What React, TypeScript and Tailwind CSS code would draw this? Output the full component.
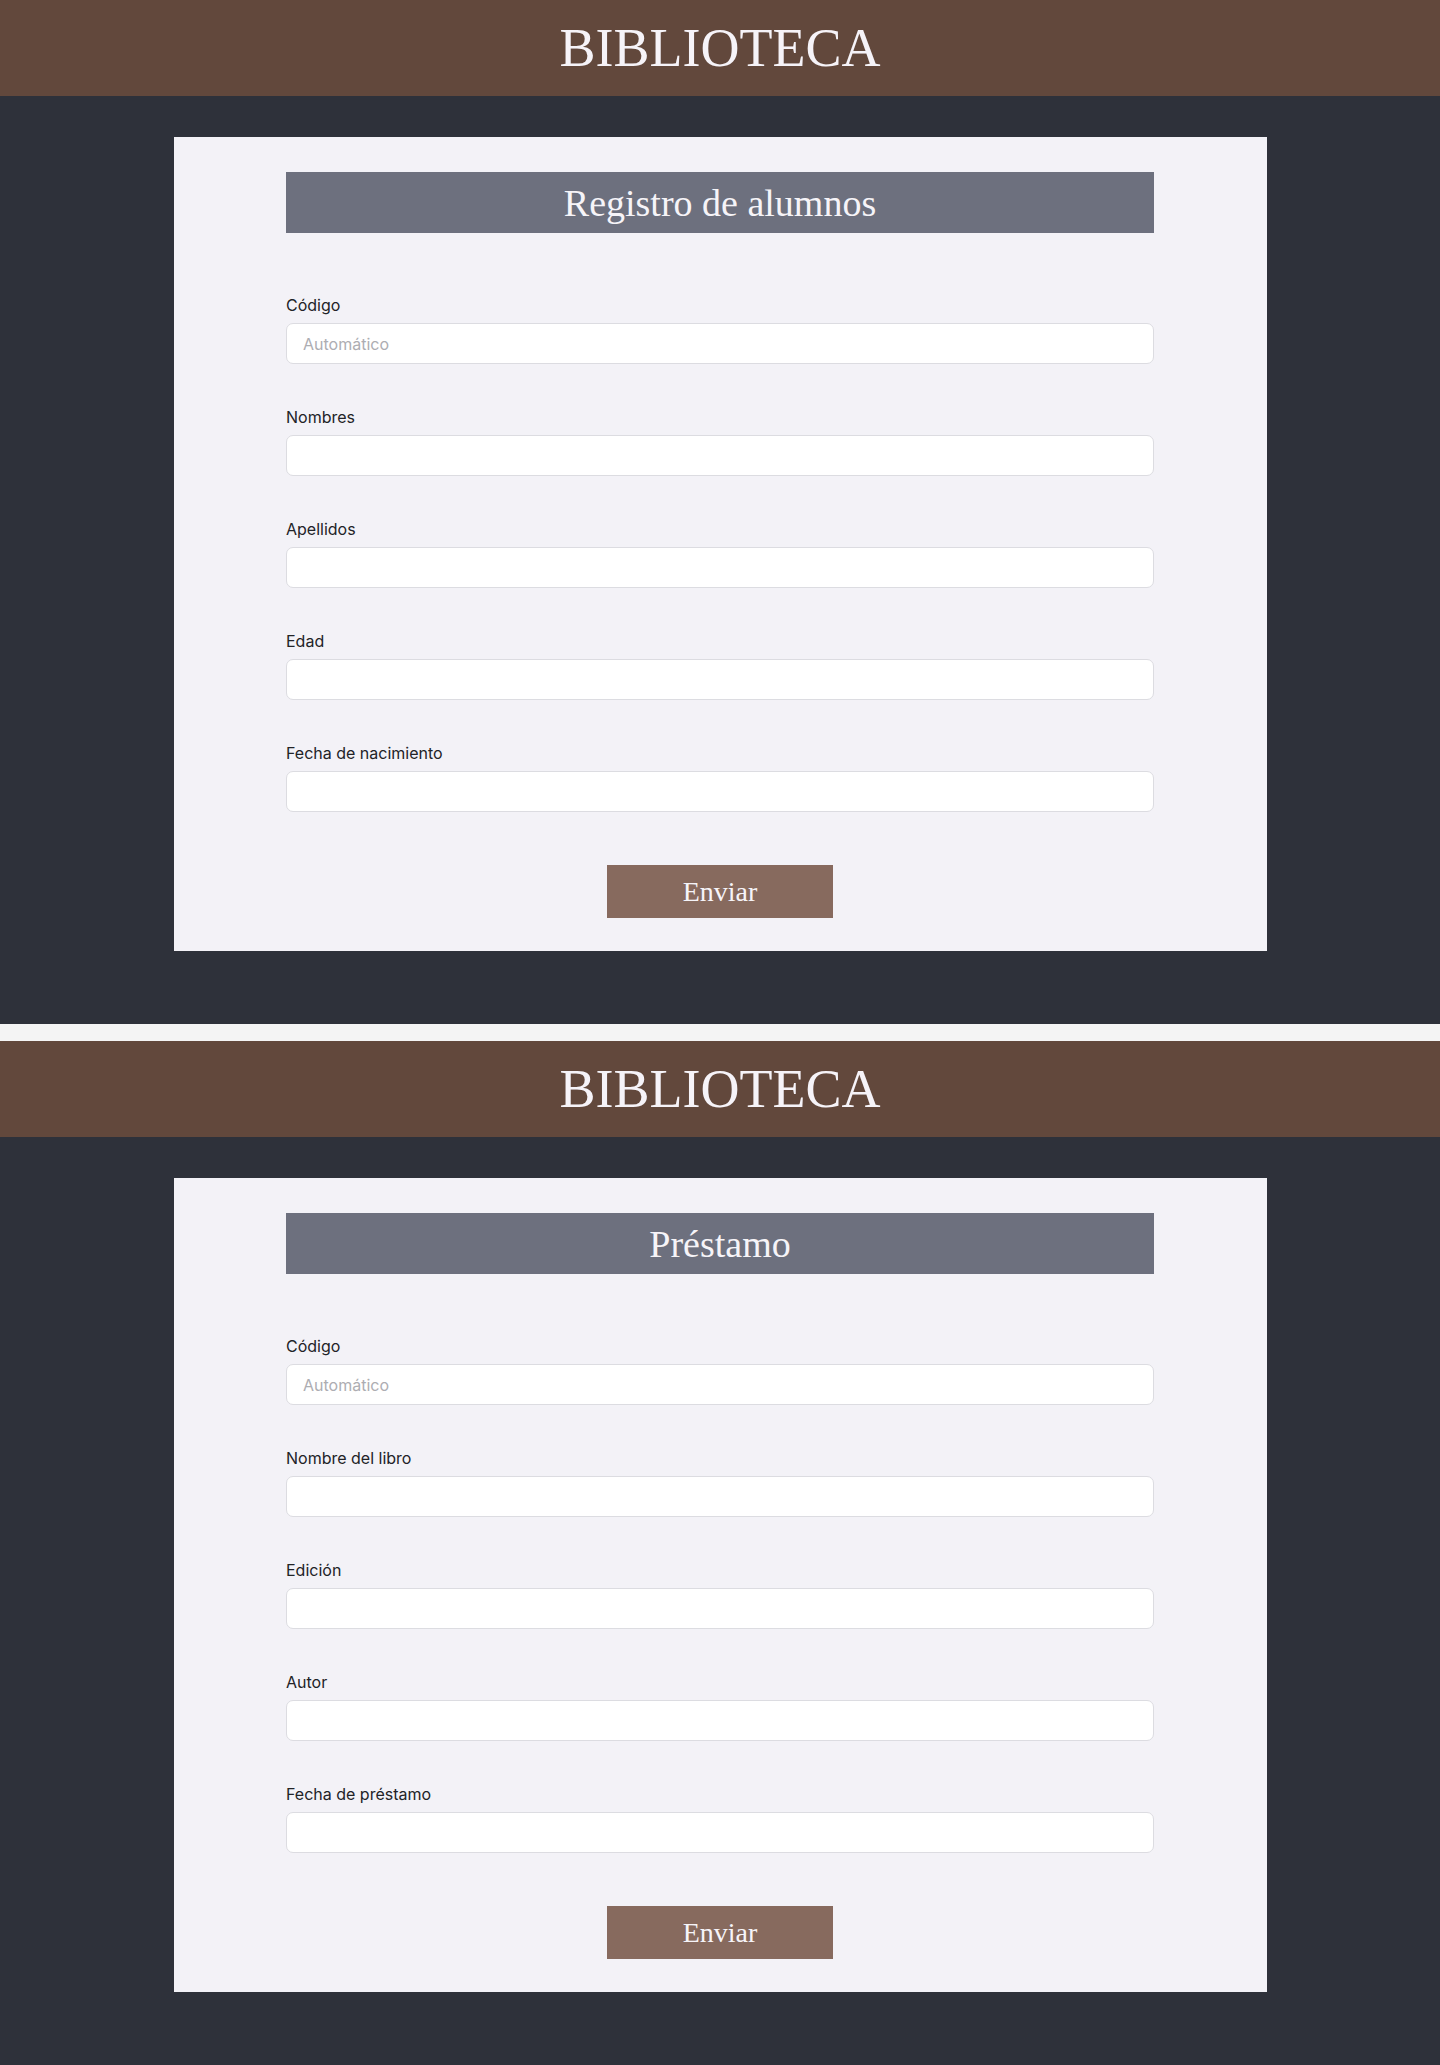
import React from 'react';

interface Field {
  label: string;
  placeholder?: string;
}

interface FormSectionProps {
  title: string;
  fields: Field[];
}

const serif = { fontFamily: '"Liberation Serif", "DejaVu Serif", serif' };

const FormSection: React.FC<FormSectionProps> = ({ title, fields }) => {
  return (
    <section className="bg-[#2e313a] h-[1024px] flex flex-col">
      {/* Cabecera */}
      <header className="h-[96px] bg-[#62483c] flex items-center justify-center">
        <h1 style={serif} className="text-[54px] leading-none text-[#f6f3f8]">
          BIBLIOTECA
        </h1>
      </header>

      <div className="mt-[41px] mx-auto w-[1093px] bg-[#f3f2f7] pt-[35px] pb-[33px] flex flex-col items-center">
        <div className="w-[868px]">
          <h2
            style={serif}
            className="h-[61px] bg-[#6d707e] text-[38px] text-[#f6f4f8] flex items-center justify-center leading-none"
          >
            {title}
          </h2>

          <form className="mt-[60px] flex flex-col gap-[41px]" style={{ fontFamily: 'Inter, "Noto Sans", sans-serif' }}>
            {fields.map((field) => (
              <div key={field.label} className="flex flex-col">
                <label className="text-[16px] leading-6 text-[#222327] mb-[6px]">{field.label}</label>
                <input
                  type="text"
                  placeholder={field.placeholder}
                  className="h-[41px] w-full bg-white rounded-[7px] border-[1.5px] border-[#dcdce1] px-4 text-[16px] text-[#222] placeholder:text-[#adadb2] outline-none"
                />
              </div>
            ))}
          </form>

          <div className="mt-[53px] flex justify-center">
            <button
              style={serif}
              className="w-[226px] h-[53px] bg-[#876a5e] text-[28px] text-[#f6f4f8] leading-none"
            >
              Enviar
            </button>
          </div>
        </div>
      </div>
    </section>
  );
};

const App: React.FC = () => {
  return (
    <div className="bg-[#f4f4f4] flex flex-col gap-[17px] w-full">
      <FormSection
        title="Registro de alumnos"
        fields={[
          { label: 'Código', placeholder: 'Automático' },
          { label: 'Nombres' },
          { label: 'Apellidos' },
          { label: 'Edad' },
          { label: 'Fecha de nacimiento' },
        ]}
      />
      <FormSection
        title="Préstamo"
        fields={[
          { label: 'Código', placeholder: 'Automático' },
          { label: 'Nombre del libro' },
          { label: 'Edición' },
          { label: 'Autor' },
          { label: 'Fecha de préstamo' },
        ]}
      />
    </div>
  );
};

export default App;
